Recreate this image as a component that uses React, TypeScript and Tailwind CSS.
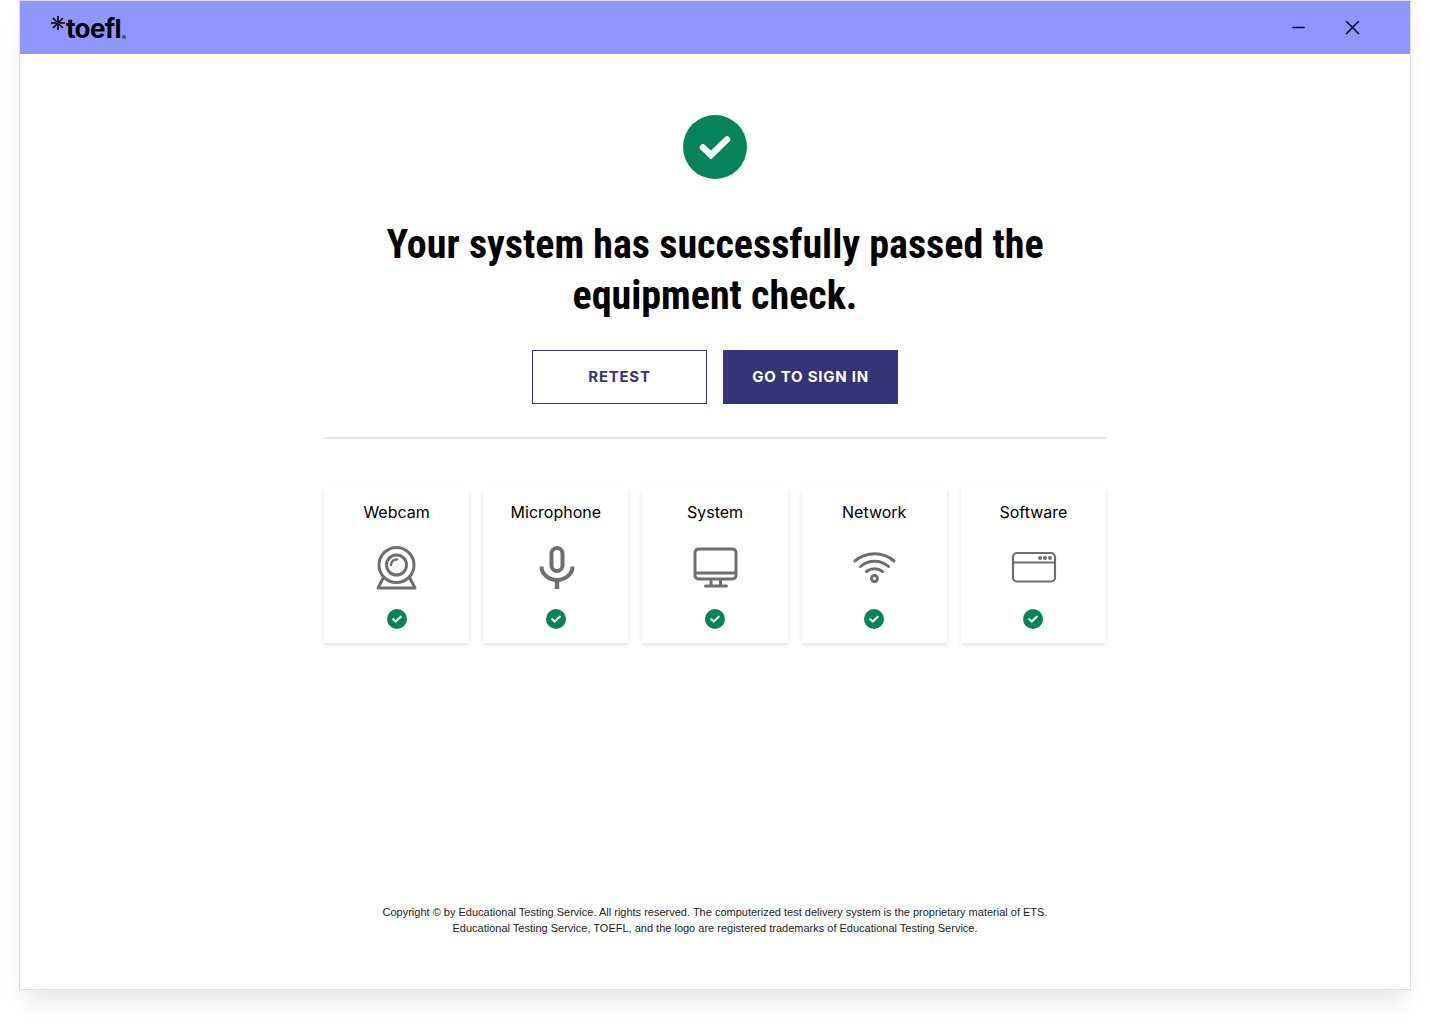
import type { ReactNode } from 'react';

const WebcamIcon = () => (
  <svg viewBox="0 0 48 48" className="h-12 w-12" fill="none" stroke="currentColor" strokeWidth="3">
    <circle cx="23.5" cy="21" r="17.5" />
    <circle cx="23.5" cy="21" r="10" />
    <path d="M18 21a5.5 5.5 0 0 1 6-5.5" strokeWidth="2.5" strokeLinecap="round" />
    <path d="M10.5 33.5 5 44h37l-5.5-10.5" strokeLinejoin="round" />
  </svg>
);

const MicrophoneIcon = () => (
  <svg viewBox="0 0 48 48" className="h-12 w-12" fill="none" stroke="currentColor" strokeWidth="4">
    <rect x="19.5" y="4" width="11" height="23" rx="5.5" />
    <path d="M9.5 22.5a15.5 13.5 0 0 0 31 0" />
    <path d="M25 36v9" strokeWidth="4.5" />
  </svg>
);

const SystemIcon = () => (
  <svg viewBox="0 0 48 48" className="h-12 w-12" fill="none" stroke="currentColor" strokeWidth="3">
    <rect x="4" y="5" width="41" height="30" rx="3.5" />
    <path d="M4 29h41M20 35v7M29.5 35v7" />
    <path d="M14.5 42h21" strokeLinecap="round" />
  </svg>
);

const NetworkIcon = () => (
  <svg viewBox="0 0 48 48" className="h-12 w-12" fill="none" stroke="currentColor" strokeWidth="3" strokeLinecap="round">
    <path d="M5 17a30 30 0 0 1 39 0" />
    <path d="M10.5 22.5a21 21 0 0 1 28 0" />
    <path d="M16.5 27.5a13 13 0 0 1 16 0" />
    <circle cx="24.5" cy="34.5" r="3" />
  </svg>
);

const SoftwareIcon = () => (
  <svg viewBox="0 0 48 48" className="h-12 w-12" fill="none" stroke="currentColor" strokeWidth="2.2">
    <rect x="4" y="9" width="42" height="28.5" rx="4" />
    <path d="M4 18.5h42" />
    <g fill="currentColor" stroke="none">
      <circle cx="31" cy="14" r="2" />
      <circle cx="36" cy="14" r="2" />
      <circle cx="41" cy="14" r="2" />
    </g>
  </svg>
);

const CheckBadge = ({ className }: { className: string }) => (
  <svg viewBox="0 0 64 64" className={className} aria-hidden="true">
    <circle cx="32" cy="32" r="32" fill="#05845b" />
    <path d="M20 32.5 28 40 44 24.5" fill="none" stroke="#fff" strokeWidth="6.5" strokeLinecap="round" />
  </svg>
);

const Logo = () => (
  <div className="flex items-start pt-0.5 text-black">
    <svg viewBox="0 0 16 16" className="mt-px h-4 w-4" stroke="currentColor" strokeWidth="1.6" aria-hidden="true">
      <path d="M8 1v5.5M8 9.5V15M1 8h5.5M9.5 8H15M3 3l4 4M9 9l4 4M3 13 13 3" />
    </svg>
    <span className="text-[26px] leading-[30px] font-bold tracking-tight">toefl</span>
    <span className="mt-[21px] ml-px h-1 w-1 rounded-full bg-black/50" />
  </div>
);

const checks: { label: string; icon: ReactNode }[] = [
  { label: 'Webcam', icon: <WebcamIcon /> },
  { label: 'Microphone', icon: <MicrophoneIcon /> },
  { label: 'System', icon: <SystemIcon /> },
  { label: 'Network', icon: <NetworkIcon /> },
  { label: 'Software', icon: <SoftwareIcon /> },
];

export default function App() {
  return (
    <div className="flex min-h-screen flex-col bg-white px-[19px] pb-[38px] font-[Inter,sans-serif] text-black">
      <div className="flex flex-1 flex-col border border-[#dedee2] bg-white shadow-[0_16px_24px_-6px_rgba(0,0,0,0.11)]">
        <header className="flex h-[53px] items-center justify-between bg-[#9196ff] pr-12 pl-[30px]">
          <Logo />
          <div className="flex items-center gap-[34px]">
            <button type="button" aria-label="Minimize">
              <svg viewBox="0 0 20 20" className="h-5 w-5" fill="none" stroke="#08081f" strokeWidth="1.6" strokeLinecap="round">
                <path d="M5 9.5h11" />
              </svg>
            </button>
            <button type="button" aria-label="Close">
              <svg viewBox="0 0 20 20" className="h-5 w-5" fill="none" stroke="#08081f" strokeWidth="1.6" strokeLinecap="round">
                <path d="m4.5 3.5 12 12M16.5 3.5l-12 12" />
              </svg>
            </button>
          </div>
        </header>

        <main className="mx-auto flex w-full max-w-[782px] flex-1 flex-col items-center pt-[61px]">
          <CheckBadge className="h-16 w-16" />
          <h1 className="mt-10 max-w-[700px] text-center font-['Roboto_Condensed',Roboto,sans-serif] text-[40px] leading-[51px] font-bold">
            Your system has successfully passed the equipment check.
          </h1>

          <div className="mt-[29px] flex gap-4 text-[15px] font-bold tracking-wider">
            <button type="button" className="h-[54px] w-[175px] border border-[#35357a] bg-white text-[#35357a]">
              RETEST
            </button>
            <button type="button" className="h-[54px] w-[175px] bg-[#343477] text-white">
              GO TO SIGN IN
            </button>
          </div>

          <hr className="mt-[33px] w-full border-t-2 border-[#e4e4e4]" />

          <ul className="mt-[49px] grid w-full grid-cols-5 gap-[14px]">
            {checks.map((check) => (
              <li
                key={check.label}
                className="flex h-[155px] flex-col items-center bg-white pt-3 shadow-[0_2px_4px_rgba(0,0,0,0.12)]"
              >
                <span className="text-base leading-6">{check.label}</span>
                <span className="mt-5 text-[#6e6e6e]">{check.icon}</span>
                <CheckBadge className="mt-[17px] h-5 w-5" />
              </li>
            ))}
          </ul>
        </main>

        <footer className="pb-[53px] text-center font-['Liberation_Sans',sans-serif] text-[11px] leading-4 text-[#222]">
          <p>
            Copyright © by Educational Testing Service. All rights reserved. The computerized test delivery system is the
            proprietary material of ETS.
          </p>
          <p>Educational Testing Service, TOEFL, and the logo are registered trademarks of Educational Testing Service.</p>
        </footer>
      </div>
    </div>
  );
}
